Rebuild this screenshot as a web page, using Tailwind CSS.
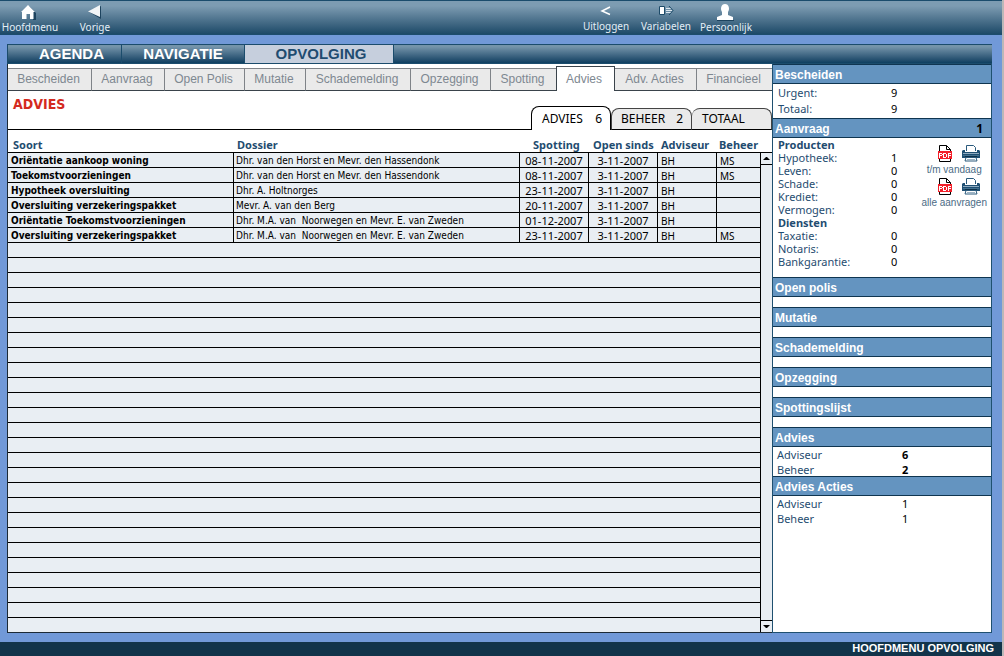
<!DOCTYPE html>
<html lang="nl">
<head>
<meta charset="utf-8">
<title>Hoofdmenu Opvolging</title>
<script src="https://cdn.jsdelivr.net/npm/@tailwindcss/browser@4"></script>
</head>
<body class="flex min-h-screen flex-col border-r-2 border-[#bcb8b8] bg-[#7199d8] font-['Liberation_Sans',sans-serif]">

<svg class="hidden" aria-hidden="true">
  <symbol id="pdf" viewBox="0 0 14 17">
    <path d="M1.500.5h7l4 4v12h-11z" fill="#fff" stroke="#000"/>
    <path d="M8.500.5v4h4" fill="none" stroke="#000"/>
    <path d="M0 6h14v8H0z" fill="#f3202a"/>
    <path d="M1 8h3v1h1v1H4v1H2v2H1zM2 9v1h2V9zM5 8h3v1h1v3H8v1H5zM6 9v3h2V9zM10 8h3v1h-2v1h2v1h-2v2h-1z" fill="#fff" fill-rule="evenodd" shape-rendering="crispEdges"/>
  </symbol>
  <symbol id="printer" viewBox="0 0 18 17">
    <path d="M4.500 6V.5h7l2 2V6" fill="#fff" stroke="#2a5a7c"/>
    <path d="M1 5h2v2h12V5h2l1 1v7H0V6z" fill="#1f4f72"/>
    <path d="M1 8.500h16" stroke="#8fabc0"/>
    <path d="M1 10.500h16" stroke="#44718f"/>
    <path d="M3 11h12v1H3z" fill="#0d2f48"/>
    <path d="M4 12.500h10l1 3.500H3z" fill="#fff" stroke="#2a5a7c"/>
    <path d="M5 14.500h8" stroke="#9db4c6"/>
  </symbol>
</svg>

<header class="flex h-[35px] justify-between border-y border-[#1b4c6c] bg-linear-to-b from-[#7d9cb2] from-15% to-[#1c4a68] font-['Noto_Sans',sans-serif] text-[10px] leading-3 text-[#e4eef6]">
  <div class="flex">
    <button class="flex w-[60px] flex-col items-center justify-end pb-px">
      <svg class="mr-1 h-[17px] w-4" viewBox="0 0 16 17"><path d="M9 2l7 7v7h-3v-6z" fill="#1d435e"/><path d="M8 1l7 7h-1.500v7H10v-5H6.500v5H2V8H1z" fill="#fff"/></svg>
      Hoofdmenu
    </button>
    <button class="flex w-[70px] flex-col items-center justify-end pb-px">
      <svg class="h-[17px] w-4" viewBox="0 0 16 17"><path d="M2 8l12-6v13z" fill="#1d435e"/><path d="M1 7.500L13 1v12z" fill="#f2f5f7"/></svg>
      Vorige
    </button>
  </div>
  <div class="mr-[246px] flex">
    <button class="flex w-[60px] flex-col items-center justify-end pb-0.5">
      <svg class="h-4 w-4" viewBox="0 0 16 16"><path d="M12 3L4 7l8 3.500" fill="none" stroke="#fff" stroke-width="1.500"/></svg>
      Uitloggen
    </button>
    <button class="flex w-[60px] flex-col items-center justify-end pb-0.5">
      <svg class="h-4 w-4" viewBox="0 0 16 16"><path d="M1.500 2.500h5v8h-5z" fill="#fff" stroke="#1c4a68"/><path d="M8 4.500h5M8 6.500h6M8 8.500h5" stroke="#dbe6ee"/><path d="M11 2l4 4.500L11 11" fill="none" stroke="#1c4a68"/></svg>
      Variabelen
    </button>
    <button class="flex w-[60px] flex-col items-center justify-end pb-px">
      <svg class="mr-[2px] h-[17px] w-[18px]" viewBox="0 0 18 17"><path d="M1 16v-3l5-2V8C4 5 5 0 9 0s5 5 3 8v3l5 2v3z" fill="#fff"/><path d="M1 16.500h17" stroke="#1d435e"/></svg>
      Persoonlijk
    </button>
  </div>
</header>

<div class="mx-[7px] mt-[9px] mr-[10px] flex flex-1 flex-col">
  <nav class="flex h-5 border-y border-[#1b4c6c] bg-linear-to-b from-[#7494aa] from-10% to-[#0d3f60] text-[15px] leading-[18px] font-bold text-white">
    <button class="w-[115px] border-x border-[#1b4c6c] pl-[14px]">AGENDA</button>
    <button class="w-[122px]">NAVIGATIE</button>
    <button class="w-[150px] border-x border-[#1b4c6c] bg-[#c6cfdd] pl-1 text-[#1f4c70]">OPVOLGING</button>
  </nav>

  <div class="flex flex-1">
    <main class="flex min-w-0 flex-1 flex-col border-b border-l border-[#1c2a36] bg-white">
      <nav class="flex h-[27px] items-end text-xs text-[#7e8891]">
        <button class="h-[23px] grow basis-[84px] border-t border-r border-b border-[#7f8388] border-b-[#3a434b] bg-[#eaeaea] pr-[2px] pb-[2px]">Bescheiden</button>
        <button class="h-[23px] grow basis-[73px] border-t border-r border-b border-[#7f8388] border-b-[#3a434b] bg-[#eaeaea] pr-[2px] pb-[2px]">Aanvraag</button>
        <button class="h-[23px] grow basis-[80px] border-t border-r border-b border-[#7f8388] border-b-[#3a434b] bg-[#eaeaea] pr-[2px] pb-[2px]">Open Polis</button>
        <button class="h-[23px] grow basis-[61px] border-t border-r border-b border-[#7f8388] border-b-[#3a434b] bg-[#eaeaea] pr-[2px] pb-[2px]">Mutatie</button>
        <button class="h-[23px] grow basis-[105px] border-t border-r border-b border-[#7f8388] border-b-[#3a434b] bg-[#eaeaea] pr-[2px] pb-[2px]">Schademelding</button>
        <button class="h-[23px] grow basis-[80px] border-t border-r border-b border-[#7f8388] border-b-[#3a434b] bg-[#eaeaea] pr-[2px] pb-[2px]">Opzegging</button>
        <button class="h-[23px] grow basis-[65px] border-t border-b border-[#7f8388] border-b-[#3a434b] bg-[#eaeaea] pr-[2px] pb-[2px]">Spotting</button>
        <button class="h-[25px] grow basis-[59px] border-x border-t border-[#3a434b] bg-white pr-[3px]">Advies</button>
        <button class="h-[23px] grow basis-[82px] border-t border-r border-b border-[#7f8388] border-b-[#3a434b] bg-[#eaeaea] pr-[2px] pb-[2px]">Adv. Acties</button>
        <button class="h-[23px] grow basis-[75px] border-t border-b border-[#7f8388] border-b-[#3a434b] bg-[#eaeaea] pr-[2px] pb-[2px]">Financieel</button>
      </nav>

      <div class="flex h-[39px] items-end font-['Noto_Sans',sans-serif] text-xs text-black">
        <h1 class="h-full flex-1 border-b border-black pt-1 pl-[5px] font-['DejaVu_Sans_Condensed','DejaVu_Sans',sans-serif] text-[14px] leading-[18px] font-bold text-[#d42a20]">ADVIES</h1>
        <button class="flex h-6 w-20 items-center justify-between rounded-t-lg border-x border-t border-black bg-white pr-2 pl-[10px]"><span>ADVIES</span><span>6</span></button>
        <button class="flex h-[22px] w-[81px] items-center justify-between rounded-t-lg border border-[#444] border-b-black bg-[#eaeaea] pr-2 pl-[9px]"><span>BEHEER</span><span>2</span></button>
        <button class="flex h-[22px] w-20 items-center rounded-t-lg border border-l-0 border-[#444] border-b-black bg-[#eaeaea] pl-[10px]">TOTAAL</button>
      </div>

      <div class="flex flex-1">
        <div class="flex min-w-0 flex-1 flex-col">
          <table class="w-full table-fixed border-separate border-spacing-0 font-['DejaVu_Sans_Condensed','DejaVu_Sans',sans-serif] text-[10px] leading-[12px] text-black [&_tbody_td]:border-r [&_tbody_td]:border-b [&_tbody_td]:border-black [&_tbody_td]:bg-[#e9eef3] [&_tbody_td]:px-[2px] [&_tbody_td]:pt-[2px] [&_td]:h-[15px] [&_td]:whitespace-pre">
            <colgroup><col class="w-[226px]"><col><col class="w-[69px]"><col class="w-[69px]"><col class="w-[59px]"><col class="w-[44px]"></colgroup>
            <thead class="text-left font-['Noto_Sans',sans-serif] text-[11px] leading-[14px] text-[#1f4c70] [&_th]:h-[23px] [&_th]:border-b [&_th]:border-black [&_th]:pt-2 [&_th]:whitespace-nowrap">
              <tr><th class="pl-[5px]">Soort</th><th class="pl-[3px]">Dossier</th><th class="pl-[13px]">Spotting</th><th class="pl-1">Open sinds</th><th class="pl-[3px]">Adviseur</th><th class="pl-[2px]">Beheer</th></tr>
            </thead>
            <tbody class="[&_td:nth-child(1)]:pl-[3px] [&_td:nth-child(1)]:font-bold [&_td:nth-child(n+3)]:font-['Noto_Sans',sans-serif] [&_td:nth-child(3)]:text-center [&_td:nth-child(4)]:text-center [&_td:nth-child(3)]:text-[11px] [&_td:nth-child(4)]:text-[11px] [&_td:nth-child(n+5)]:pl-[3px]">
              <tr><td>Oriëntatie aankoop woning</td><td>Dhr. van den Horst en Mevr. den Hassendonk</td><td>08-11-2007</td><td>3-11-2007</td><td>BH</td><td>MS</td></tr>
              <tr><td>Toekomstvoorzieningen</td><td>Dhr. van den Horst en Mevr. den Hassendonk</td><td>08-11-2007</td><td>3-11-2007</td><td>BH</td><td>MS</td></tr>
              <tr><td>Hypotheek oversluiting</td><td>Dhr. A. Holtnorges</td><td>23-11-2007</td><td>3-11-2007</td><td>BH</td><td></td></tr>
              <tr><td>Oversluiting verzekeringspakket</td><td>Mevr. A. van den Berg</td><td>20-11-2007</td><td>3-11-2007</td><td>BH</td><td></td></tr>
              <tr><td>Oriëntatie Toekomstvoorzieningen</td><td>Dhr. M.A. van  Noorwegen en Mevr. E. van Zweden</td><td>01-12-2007</td><td>3-11-2007</td><td>BH</td><td></td></tr>
              <tr><td>Oversluiting verzekeringspakket</td><td>Dhr. M.A. van  Noorwegen en Mevr. E. van Zweden</td><td>23-11-2007</td><td>3-11-2007</td><td>BH</td><td>MS</td></tr>
            </tbody>
          </table>
          <div class="flex-1 border-r border-black bg-[repeating-linear-gradient(to_bottom,#e9eef3_0px,#e9eef3_14px,#000_14px,#000_15px)]"></div>
        </div>
        <div class="mt-[22px] flex w-[11px] flex-col justify-between bg-[#e9eef3]">
          <button aria-label="Omhoog" class="flex h-[13px] items-center justify-center border-y border-black"><svg class="h-[3px] w-[7px]" viewBox="0 0 7 3"><path d="M0 3l3-3h1l3 3z"/></svg></button>
          <button aria-label="Omlaag" class="flex h-3 items-center justify-center border-t border-black"><svg class="h-[3px] w-[7px]" viewBox="0 0 7 3"><path d="M0 0l3 3h1l3-3z"/></svg></button>
        </div>
      </div>
    </main>

    <aside class="flex w-[220px] flex-col border-x border-b border-[#1f5070] bg-white font-['Noto_Sans',sans-serif] text-[11px] text-[#1f4c70] [&_h2]:flex [&_h2]:h-5 [&_h2]:items-center [&_h2]:justify-between [&_h2]:border-y [&_h2]:border-[#0f3550] [&_h2]:bg-[#6494c0] [&_h2]:pt-[2px] [&_h2]:pl-[2px] [&_h2]:font-['Liberation_Sans',sans-serif] [&_h2]:text-xs [&_h2]:font-bold [&_h2]:text-white [&_dd]:text-black [&_dl>div]:flex [&_dt]:w-[113px]">
      <section>
        <h2>Bescheiden</h2>
        <dl class="h-[34px] pt-px pl-[5px] leading-4"><div><dt>Urgent:</dt><dd>9</dd></div><div><dt>Totaal:</dt><dd>9</dd></div></dl>
      </section>
      <section>
        <h2>Aanvraag <span class="pr-2 font-['Noto_Sans',sans-serif] text-black">1</span></h2>
        <div class="flex h-[139px] justify-between pl-[5px]">
          <div class="leading-[13px]">
            <h3 class="font-bold">Producten</h3>
            <dl><div><dt>Hypotheek:</dt><dd>1</dd></div><div><dt>Leven:</dt><dd>0</dd></div><div><dt>Schade:</dt><dd>0</dd></div><div><dt>Krediet:</dt><dd>0</dd></div><div><dt>Vermogen:</dt><dd>0</dd></div></dl>
            <h3 class="font-bold">Diensten</h3>
            <dl><div><dt>Taxatie:</dt><dd>0</dd></div><div><dt>Notaris:</dt><dd>0</dd></div><div><dt>Bankgarantie:</dt><dd>0</dd></div></dl>
          </div>
          <div class="flex flex-col items-center pt-[7px] pr-1 font-['Liberation_Sans',sans-serif] text-[10px] leading-4 text-[#4b6b85]">
            <div class="flex gap-[10px] pl-[10px]"><button aria-label="PDF t/m vandaag"><svg class="h-[17px] w-[14px]"><use href="#pdf"/></svg></button><button aria-label="Print t/m vandaag"><svg class="h-[17px] w-[18px]"><use href="#printer"/></svg></button></div>
            <span>t/m vandaag</span>
            <div class="flex gap-[10px] pl-[10px]"><button aria-label="PDF alle aanvragen"><svg class="h-[17px] w-[14px]"><use href="#pdf"/></svg></button><button aria-label="Print alle aanvragen"><svg class="h-[17px] w-[18px]"><use href="#printer"/></svg></button></div>
            <span>alle aanvragen</span>
          </div>
        </div>
      </section>
      <section class="flex flex-col gap-[10px]">
        <h2>Open polis</h2>
        <h2>Mutatie</h2>
        <h2>Schademelding</h2>
        <h2>Opzegging</h2>
        <h2>Spottingslijst</h2>
        <h2>Advies</h2>
      </section>
      <dl class="h-[29px] pl-1 leading-[15px] [&_dt]:w-[125px]"><div><dt>Adviseur</dt><dd class="font-bold">6</dd></div><div><dt>Beheer</dt><dd class="font-bold">2</dd></div></dl>
      <section>
        <h2>Advies Acties</h2>
        <dl class="pl-1 leading-[15px] [&_dt]:w-[125px]"><div><dt>Adviseur</dt><dd>1</dd></div><div><dt>Beheer</dt><dd>1</dd></div></dl>
      </section>
    </aside>
  </div>
</div>

<footer class="mt-[9px] h-[14px] bg-[#12344a] pr-2 text-right text-[11px] leading-[13px] font-bold text-white">HOOFDMENU OPVOLGING</footer>
</body>
</html>
